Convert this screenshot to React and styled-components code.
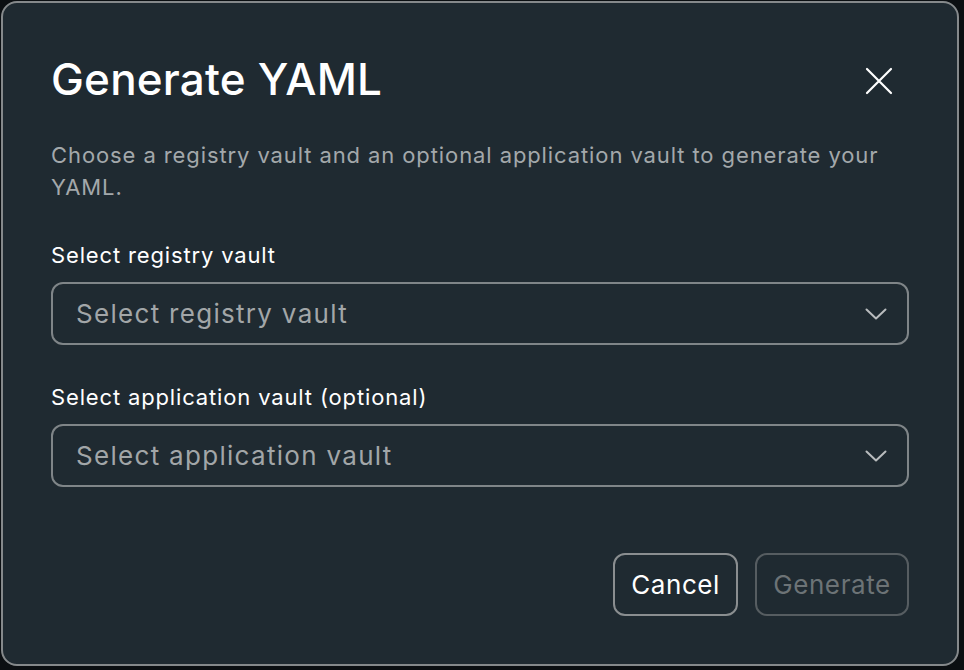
import React from "react";
import styled, { createGlobalStyle } from "styled-components";

const GlobalStyle = createGlobalStyle`
  html, body {
    margin: 0;
    padding: 0;
    background: #0b0f12;
    font-family: Inter, "Noto Sans", "Liberation Sans", sans-serif;
  }
`;

const Page = styled.div`
  padding: 1px 5px 4px 1px;
  height: 670px;
  box-sizing: border-box;
`;

const Dialog = styled.div`
  height: 665px;
  box-sizing: border-box;
  background: #1f2a31;
  border: 2px solid #85898b;
  border-radius: 16px;
  padding: 44px 48px 48px 48px;
  display: flex;
  flex-direction: column;
  color: #fff;
`;

const Header = styled.div`
  display: flex;
  align-items: center;
  justify-content: space-between;
`;

const Title = styled.h2`
  margin: 0;
  font-size: 44px;
  font-weight: 500;
  line-height: 64px;
  letter-spacing: 0.2px;
`;

const CloseButton = styled.button`
  background: none;
  border: none;
  padding: 0;
  margin-right: 16px;
  margin-top: 4px;
  width: 28px;
  height: 28px;
  display: flex;
  align-items: center;
  justify-content: center;
  cursor: pointer;
`;

const Description = styled.p`
  margin: 28px 0 0;
  font-size: 22px;
  line-height: 32px;
  color: #a3a8ab;
  letter-spacing: 0.9px;
`;

const Field = styled.div`
  display: flex;
  flex-direction: column;
  margin-top: ${(p) => p.$top}px;
`;

const Label = styled.label`
  font-size: 22px;
  line-height: 28px;
  color: #fff;
  letter-spacing: 0.85px;
  margin-bottom: 13px;
`;

const Select = styled.div`
  height: 63px;
  flex-shrink: 0;
  box-sizing: border-box;
  border: 2px solid #7f8588;
  border-radius: 12px;
  padding: 0 20px 0 23px;
  display: flex;
  align-items: center;
  justify-content: space-between;
  font-size: 26px;
  letter-spacing: 1.3px;
  color: #a2a6a8;
`;

const Footer = styled.div`
  margin-top: auto;
  display: flex;
  justify-content: flex-end;
  gap: 17px;
`;

const Button = styled.button`
  height: 63px;
  box-sizing: border-box;
  border-radius: 12px;
  border: 2px solid ${(p) => (p.$disabled ? "#565d61" : "#8a8e90")};
  background: transparent;
  color: ${(p) => (p.$disabled ? "#6c7376" : "#fff")};
  font-family: inherit;
  font-size: 26px;
  letter-spacing: 0.6px;
  padding: 0 16px;
  min-width: ${(p) => p.$w}px;
`;

const Chevron = () => (
  <svg width="22" height="12" viewBox="0 0 22 12" fill="none">
    <path d="M1.5 1.5 L11 10.5 L20.5 1.5" stroke="#b9bcbe" strokeWidth="2" strokeLinecap="round" strokeLinejoin="round" />
  </svg>
);

export default function App() {
  return (
    <Page>
      <GlobalStyle />
      <Dialog>
        <Header>
          <Title>Generate YAML</Title>
          <CloseButton aria-label="Close">
            <svg width="28" height="28" viewBox="0 0 28 28">
              <path d="M2 2 L26 26 M26 2 L2 26" stroke="#fff" strokeWidth="2.2" strokeLinecap="round" />
            </svg>
          </CloseButton>
        </Header>
        <Description>
          Choose a registry vault and an optional application vault to generate your YAML.
        </Description>
        <Field $top={38}>
          <Label>Select registry vault</Label>
          <Select>
            <span>Select registry vault</span>
            <Chevron />
          </Select>
        </Field>
        <Field $top={38}>
          <Label>Select application vault (optional)</Label>
          <Select>
            <span>Select application vault</span>
            <Chevron />
          </Select>
        </Field>
        <Footer>
          <Button $w={124}>Cancel</Button>
          <Button $w={154} $disabled>Generate</Button>
        </Footer>
      </Dialog>
    </Page>
  );
}
